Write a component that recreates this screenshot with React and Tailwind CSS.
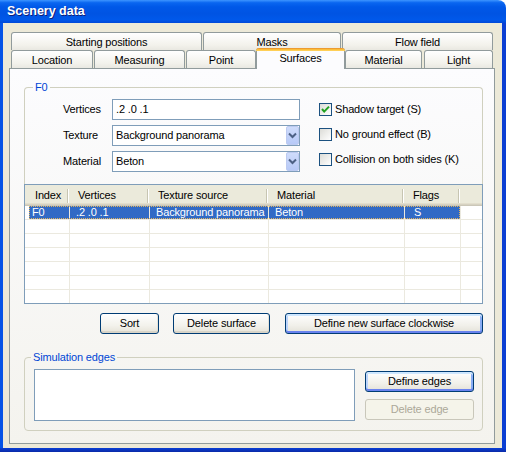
import React from "react";

const Tab = ({ label, w, ml = 0 }) => (
  <div
    className="h-[18px] shrink-0 flex items-center justify-center pt-[2px] border border-b-0 border-[#919b9c] rounded-t-[3px] bg-[linear-gradient(to_bottom,#ffffff,#f3f2ec_70%,#e9e8e1)]"
    style={{ width: w, marginLeft: ml }}
  >
    {label}
  </div>
);

const Check = ({ checked, label }) => (
  <div className="flex items-center h-[13px]">
    <div className="w-[13px] h-[13px] border border-[#1c5180] bg-[linear-gradient(135deg,#dcdcd7,#ffffff)] flex items-center justify-center">
      {checked && (
        <svg width="11" height="11" viewBox="0 0 11 11">
          <path d="M2 5 L4.2 7.6 L9 2.6" fill="none" stroke="#21a121" strokeWidth="2" />
        </svg>
      )}
    </div>
    <span className="ml-[3px]">{label}</span>
  </div>
);

const Combo = ({ value }) => (
  <div className="w-[188px] h-[21px] border border-[#7f9db9] bg-white flex">
    <div className="flex-1 pl-[3px] flex items-center">{value}</div>
    <div className="w-[13px] rounded-[2px] border border-[#bccaf0] bg-[linear-gradient(to_bottom,#cfdcfb,#b7c9f7)] flex items-center justify-center">
      <svg width="9" height="7" viewBox="0 0 9 7">
        <path d="M1 1.5 L4.5 5 L8 1.5" fill="none" stroke="#4d6185" strokeWidth="2" />
      </svg>
    </div>
  </div>
);

const Btn = ({ label, w, def, disabled, className = "" }) => (
  <div
    className={
      "h-[21px] shrink-0 flex items-center justify-center rounded-[3px] border " +
      (disabled
        ? "border-[#c9c7ba] bg-[#f5f4ea] text-[#aca899] "
        : def
        ? "border-[#003c74] bg-[linear-gradient(to_bottom,#ffffff,#f1f0ea_60%,#e3e1d7)] shadow-[inset_0_2px_0_#cee7ff,inset_0_-2px_0_#6982ee,inset_2px_0_0_#bcd4fa,inset_-2px_0_0_#89adf4] "
        : "border-[#003c74] bg-[linear-gradient(to_bottom,#ffffff,#f3f2ec_60%,#e6e3d8)] shadow-[inset_0_-2px_0_#d8d4c8,inset_-1px_0_0_#e4e2d8] ") +
      className
    }
    style={{ width: w }}
  >
    {label}
  </div>
);

const cols = [
  { name: "Index", w: 44 },
  { name: "Vertices", w: 80 },
  { name: "Texture source", w: 119 },
  { name: "Material", w: 136 },
  { name: "Flags", w: 56 },
];

const Divider = () => (
  <div className="flex h-[14px] self-center">
    <div className="w-px bg-[#c7c5b2]" />
    <div className="w-px bg-white" />
  </div>
);

export default function App() {
  const row = ["F0", ".2 .0 .1", "Background panorama", "Beton", "S"];
  return (
    <div className="w-[506px] h-[452px] bg-white overflow-hidden font-['Liberation_Sans',Arial,sans-serif] text-[11px] leading-[13px] tracking-[-0.15px] text-black">
      {/* title bar */}
      <div className="h-[23px] rounded-tr-[8px] bg-[linear-gradient(to_bottom,#3d95ff_0%,#0a66f0_12%,#0058e8_30%,#0054e3_60%,#0058ea_85%,#0048d8_100%)] flex items-center pl-[7px]">
        <span className="text-white font-bold text-[12.5px] tracking-normal [text-shadow:1px_1px_#0f1f7a]">Scenery data</span>
      </div>
      <div className="flex h-[425px]">
        <div className="w-[3px] bg-[#0553e6]" />
        <div className="w-[499px] bg-[#ece9d8] pt-[9px] pl-[6px]">
          {/* tabs */}
          <div className="w-[486px]">
            <div className="flex h-[18px] pl-[2px]">
              <Tab label="Starting positions" w={191} />
              <Tab label="Masks" w={138} ml={1} />
              <Tab label="Flow field" w={151} ml={1} />
            </div>
            <div className="flex h-[18px] pl-[2px] items-end">
              <Tab label="Location" w={82} />
              <Tab label="Measuring" w={91} ml={1} />
              <Tab label="Point" w={70} ml={1} />
              <div className="relative z-10 -mb-px h-[21px] w-[89px] shrink-0 flex flex-col bg-[#fcfcfe] border-x border-[#919b9c] rounded-t-[3px]">
                <div className="h-[3px] -mx-px rounded-t-[3px] bg-[linear-gradient(to_bottom,#e68b2c,#ffc73c_60%,#ffd66a)]" />
                <div className="flex-1 flex items-center justify-center pb-[4px]">Surfaces</div>
              </div>
              <Tab label="Material" w={77} />
              <Tab label="Light" w={69} ml={2} />
            </div>
            {/* panel */}
            <div className="h-[376px] border border-[#919b9c] bg-[linear-gradient(to_bottom,#fcfcfe,#f4f3ee)]">
              <fieldset className="ml-[14px] mt-[12px] w-[459px] border border-b-0 border-[#d0d0bf] rounded-t-[4px] pb-[12px]">
                <legend className="ml-[8px] px-[2px] leading-[13px] text-[#0046d5]">F0</legend>
                <div className="flex pt-[5px]">
                  <div className="ml-[38px] flex flex-col gap-[5px]">
                    <div className="flex items-center h-[21px]">
                      <span className="w-[49px]">Vertices</span>
                      <div className="w-[188px] h-[21px] border border-[#7f9db9] bg-white flex items-center pl-[3px]">.2 .0 .1</div>
                    </div>
                    <div className="flex items-center h-[21px]">
                      <span className="w-[49px]">Texture</span>
                      <Combo value="Background panorama" />
                    </div>
                    <div className="flex items-center h-[21px]">
                      <span className="w-[49px]">Material</span>
                      <Combo value="Beton" />
                    </div>
                  </div>
                  <div className="ml-[19px] pt-[4px] flex flex-col gap-[12px]">
                    <Check checked label="Shadow target (S)" />
                    <Check label="No ground effect (B)" />
                    <Check label="Collision on both sides (K)" />
                  </div>
                </div>
              </fieldset>
              {/* list view */}
              <div className="ml-[14px] w-[459px] h-[120px] border border-[#7f9db9] bg-white overflow-hidden">
                <div className="h-[21px] flex bg-[#ebeadb] shadow-[inset_0_-1px_0_#cbc7b8,inset_0_-2px_0_#d6d2c2,inset_0_-3px_0_#e2decd]">
                  {cols.map((c, i) => (
                    <React.Fragment key={c.name}>
                      <div
                        className={"flex items-center pb-[1px] " + (i === 0 ? "pl-[10px]" : "pl-[9px]")}
                        style={{ width: c.w - 2 }}
                      >
                        {c.name}
                      </div>
                      <Divider />
                    </React.Fragment>
                  ))}
                  <div className="flex-1" />
                </div>
                {[0, 1, 2, 3, 4, 5, 6].map((r) => {
                  const sel = r === 0;
                  return (
                    <div key={r} className="h-[14px] flex border-b border-[#ebe9df]">
                      <div className="w-[4px]" />
                      <div
                        className={
                          "flex " +
                          (sel ? "bg-[#316ac5] text-white outline-1 outline-dotted outline-[#e2b45c] -outline-offset-1" : "")
                        }
                      >
                        {cols.map((c, i) => (
                          <div
                            key={c.name}
                            className={
                              "flex items-center whitespace-nowrap overflow-hidden " +
                              (i === 0 ? "pl-[3px]" : i === 4 ? "border-l border-[#ebe9df] pl-[9px]" : "border-l border-[#ebe9df] pl-[6px]")
                            }
                            style={{ width: i === 0 ? c.w - 4 : c.w }}
                          >
                            {sel ? row[i] : ""}
                          </div>
                        ))}
                      </div>
                      <div className="flex-1 border-l border-[#ebe9df]" />
                    </div>
                  );
                })}
              </div>
              {/* buttons */}
              <div className="flex mt-[9px] ml-[90px]">
                <Btn label="Sort" w={59} />
                <Btn label="Delete surface" w={97} className="ml-[14px]" />
                <Btn label="Define new surface clockwise" w={198} def className="ml-[15px]" />
              </div>
              {/* simulation edges */}
              <fieldset className="ml-[14px] mt-[17px] w-[459px] border border-[#d0d0bf] rounded-[4px] pb-[9px]">
                <legend className="ml-[6px] px-[2px] leading-[13px] text-[#0046d5]">Simulation edges</legend>
                <div className="flex pt-[5px] pl-[9px]">
                  <div className="w-[321px] h-[52px] border border-[#7f9db9] bg-white" />
                  <div className="ml-[10px] pt-[2px] flex flex-col gap-[7px]">
                    <Btn label="Define edges" w={109} def />
                    <Btn label="Delete edge" w={109} disabled />
                  </div>
                </div>
              </fieldset>
            </div>
          </div>
        </div>
        <div className="w-[4px] bg-[#0b3fd3]" />
      </div>
      <div className="h-[4px] bg-[linear-gradient(to_bottom,#0a3fd4,#0a2aa8)]" />
    </div>
  );
}
